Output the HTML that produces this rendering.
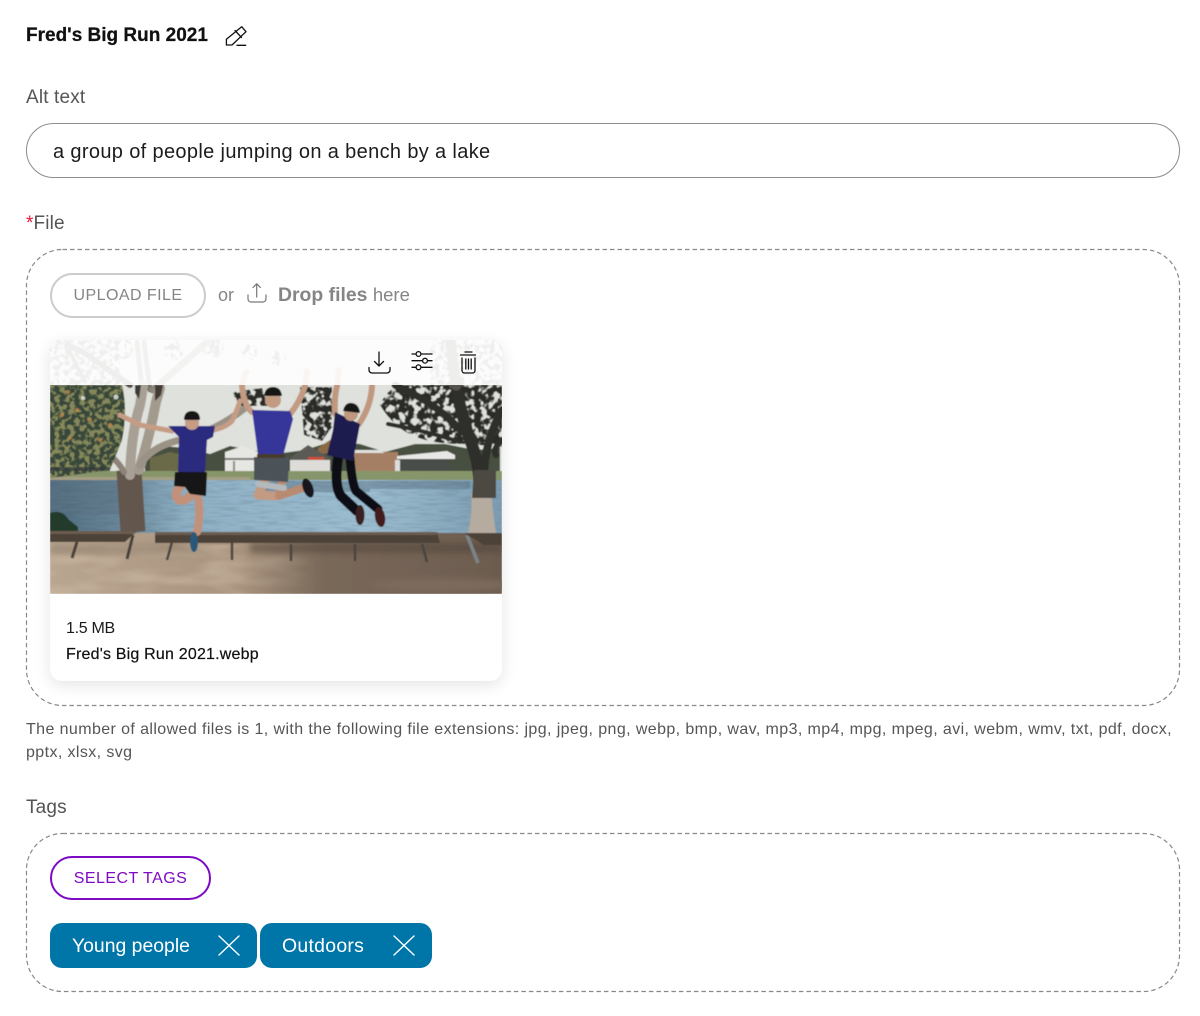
<!DOCTYPE html>
<html lang="en">
<head>
<meta charset="utf-8">
<title>Fred's Big Run 2021</title>
<style>
html,body{margin:0;padding:0;background:#fff}
body{position:relative;width:1200px;height:1016px;overflow:hidden;font-family:"Liberation Sans",sans-serif;color:#1a1a1a}
.a{position:absolute;white-space:nowrap}
h1{margin:0;font-size:19px;line-height:24px;font-weight:700;color:#111;-webkit-text-stroke:.25px #111}
.lbl{font-size:19px;line-height:24px;color:#555;letter-spacing:.15px}
.input{left:26px;top:123px;width:1152px;height:53px;border:1.5px solid #8c8c8c;border-radius:28px;box-sizing:content-box}
.inputtext{left:53px;top:139px;font-size:20px;line-height:26px;letter-spacing:.35px;color:#1c1c1c}
.btn{box-sizing:border-box;border:2px solid #ccc;border-radius:23px;font-size:16px;text-align:center;letter-spacing:.45px;color:#858585}
.card{left:50px;top:340px;width:452px;height:341px;background:#fff;border-radius:12px;box-shadow:0 4px 16px rgba(0,0,0,.11);overflow:hidden}
.tag{box-sizing:border-box;height:45px;background:#0076a8;border-radius:12px}
.tagt{font-size:19.400px;line-height:26px;color:#fff}
svg{display:block}
</style>
</head>
<body>
<h1 class="a" style="left:26px;top:24px">Fred's Big Run 2021</h1>
<svg class="a" style="left:220px;top:20px" width="32" height="32" viewBox="220 20 32 32" fill="none" stroke="#111" stroke-width="1.300" stroke-linejoin="round" stroke-linecap="round">
<path d="M241.700 26.700l4.300 5-14 13.300h-5.600v-5.700z"/><path d="M235 30.500l6.500 7"/><path d="M237 45.300h8.700"/>
</svg>

<div class="a lbl" style="left:26px;top:86px">Alt text</div>
<div class="a input"></div>
<div class="a inputtext">a group of people jumping on a bench by a lake</div>

<div class="a lbl" style="left:26px;top:212px"><span style="color:#f0143c">*</span>File</div>
<svg class="a" style="left:0;top:240px" width="1200" height="480" fill="none">
<rect x="26.500" y="9.500" width="1153" height="456" rx="36" stroke="#888" stroke-width="1.200" stroke-dasharray="4.500 3"/>
</svg>

<div class="a btn" style="left:50px;top:273px;width:156px;height:45px;line-height:41px">UPLOAD FILE</div>
<div class="a" style="left:218px;top:284px;font-size:18px;line-height:23px;color:#858585">or</div>
<svg class="a" style="left:244px;top:280px" width="26" height="26" viewBox="244 280 26 26" fill="none" stroke="#777" stroke-width="1.200" stroke-linecap="round" stroke-linejoin="round">
<path d="M256.700 297v-13M253 287.500l3.700-3.700 3.700 3.700"/><path d="M248 295v4a3 3 0 0 0 3 3h12a3 3 0 0 0 3-3v-4"/>
</svg>
<div class="a" style="left:278px;top:283px;font-size:19.400px;line-height:24px;color:#858585"><b>Drop files</b> <span style="font-size:18.500px">here</span></div>

<div class="a card">
<svg width="452" height="254" viewBox="50 340 452 254">
<defs>
<linearGradient id="wat" x1="0" x2="1" y1="0" y2="0">
<stop offset="0" stop-color="#4f6c7e"/><stop offset=".17" stop-color="#6d8a9c"/><stop offset=".3" stop-color="#8fb0c4"/><stop offset=".7" stop-color="#9dbdd1"/><stop offset="1" stop-color="#7d9db2"/>
</linearGradient>
<linearGradient id="gnd" x1="0" x2="1" y1="0" y2="0">
<stop offset="0" stop-color="#b9a690"/><stop offset=".42" stop-color="#a8937e"/><stop offset=".6" stop-color="#7a695a"/><stop offset="1" stop-color="#6c5c4f"/>
</linearGradient>
<linearGradient id="sandg" x1="0" x2="1" y1="0" y2="0">
<stop offset="0" stop-color="#d0bea8"/><stop offset=".6" stop-color="#cbb9a3"/><stop offset="1" stop-color="#cbb9a3" stop-opacity="0"/>
</linearGradient>
<clipPath id="cano"><path d="M50 385H122Q128 410 122 440L110 470 50 478z"/></clipPath>
<filter id="s" x="-5%" y="-5%" width="110%" height="110%"><feGaussianBlur stdDeviation=".5"/></filter>
<filter id="s2" x="-20%" y="-20%" width="140%" height="140%"><feGaussianBlur stdDeviation="3"/></filter>
<filter id="leaf" x="0" y="0" width="100%" height="100%" color-interpolation-filters="sRGB">
<feTurbulence type="fractalNoise" baseFrequency=".2" numOctaves="2" seed="4" result="n"/>
<feColorMatrix in="n" type="matrix" values="0 0 0 0 0 0 0 0 0 0 0 0 0 0 0 9 0 0 0 -4.200" result="m"/>
<feComposite in="SourceGraphic" in2="m" operator="in"/>
</filter>
<filter id="leaf2" x="0" y="0" width="100%" height="100%" color-interpolation-filters="sRGB">
<feTurbulence type="fractalNoise" baseFrequency=".16" numOctaves="2" seed="9" result="n"/>
<feColorMatrix in="n" type="matrix" values="0 0 0 0 0 0 0 0 0 0 0 0 0 0 0 8 0 0 0 -3.100" result="m"/>
<feComposite in="SourceGraphic" in2="m" operator="in"/>
</filter>
<filter id="rip" x="0" y="0" width="100%" height="100%" color-interpolation-filters="sRGB">
<feTurbulence type="fractalNoise" baseFrequency=".05 .55" numOctaves="2" seed="7" result="n"/>
<feColorMatrix in="n" type="matrix" values="0 0 0 0 0 0 0 0 0 0 0 0 0 0 0 5 0 0 0 -2.300" result="m"/>
<feComposite in="SourceGraphic" in2="m" operator="in"/>
</filter>
<filter id="sand" x="0" y="0" width="100%" height="100%" color-interpolation-filters="sRGB">
<feTurbulence type="fractalNoise" baseFrequency=".02 .07" numOctaves="2" seed="11" result="n"/>
<feColorMatrix in="n" type="matrix" values="0 0 0 0 0 0 0 0 0 0 0 0 0 0 0 3 0 0 0 -1.200" result="m"/>
<feComposite in="SourceGraphic" in2="m" operator="in"/>
</filter>
</defs>
<g filter="url(#s)">
<rect x="50" y="340" width="452" height="254" fill="#dfe1dc"/>

<!-- distant trees -->
<path d="M145 472v-18l18-8 22 2 25 6 20-8 20 4 25 4 30-4 25-8 30 2 25 8 30-8 30 0 30 6 25-2v24z" fill="#46503f"/>
<path d="M150 472v-14l20-6 20 4v16z" fill="#6b6a4a"/>
<path d="M318 448l12-8 18 2 8 10-38 2z" fill="#8a6b45"/>
<!-- buildings -->
<path d="M225 452l18-6 15 6v19h-33z" fill="#e6e6e3"/>
<rect x="225" y="458" width="33" height="2" fill="#777"/>
<rect x="233" y="461" width="2" height="10" fill="#888"/>
<path d="M290 458l18-13 22 13v3h-40z" fill="#5b5a55"/>
<rect x="290" y="460" width="40" height="11" fill="#dddcd8"/>
<rect x="308" y="457" width="16" height="3" fill="#c9503a"/>
<rect x="354" y="452" width="44" height="19" fill="#a57f63"/>
<path d="M354 450h28l2 3h-30z" fill="#e0e0dd"/>
<path d="M397 456l50-5 8 4v4h-58z" fill="#e7e8e6"/>
<rect x="400" y="459" width="50" height="12" fill="#4a4d4a"/>
<rect x="395" y="460" width="5" height="11" fill="#ddd"/>
<!-- grass and water -->
<rect x="50" y="471" width="452" height="10" fill="#87966a"/>
<rect x="50" y="477" width="200" height="3" fill="#a69e82"/>
<rect x="50" y="480" width="452" height="54" fill="url(#wat)"/>
<g fill="#5d7486" opacity=".5">
<rect x="260" y="481" width="110" height="11"/><rect x="370" y="481" width="100" height="8"/><rect x="50" y="481" width="75" height="34"/>
</g>
<rect x="50" y="480" width="452" height="54" fill="#34505f" opacity=".14" filter="url(#rip)"/>
<path d="M50 513q12-4 18 6l10 8v6H50z" fill="#243a2c"/>
<!-- ground -->
<rect x="50" y="533" width="452" height="61" fill="url(#gnd)"/>
<rect x="50" y="545" width="270" height="49" fill="url(#sandg)" opacity=".55" filter="url(#sand)"/>
<g filter="url(#s2)">
<path d="M50 544h130l40 10H50z" fill="#8f7e6c" opacity=".6"/>
<path d="M250 553h252v-10H250z" fill="#4f4338" opacity=".5"/>
<ellipse cx="440" cy="585" rx="70" ry="7" fill="#7c6b5c"/>
</g>

<!-- left tree (strokes) -->
<g fill="none" stroke-linecap="round">
<path d="M130 385L83 352 67 345" stroke="#55504a" stroke-width="6"/>
<path d="M85 382L70 352" stroke="#55504a" stroke-width="4"/>
<path d="M142 390L137 342" stroke="#7a746c" stroke-width="5"/>
<path d="M150 390L144 342" stroke="#7a746c" stroke-width="5"/>
<path d="M153 390L207 342" stroke="#8b847a" stroke-width="7"/>
<path d="M133 532Q131 500 129 470" stroke="#62574e" stroke-width="25" stroke-linecap="butt"/>
<path d="M130 475Q131 435 140 405 142 395 143 385" stroke="#a8a094" stroke-width="10"/>
<path d="M139 470Q150 435 156 402L160 388" stroke="#a39a8e" stroke-width="10"/>
<path d="M140 465Q150 448 176 441 215 432 245 408" stroke="#9b9286" stroke-width="7"/>
<path d="M124 472Q115 455 95 447" stroke="#8d8378" stroke-width="6"/>
</g>
<path d="M155 385l8 0-2 10-6 6z" fill="#3f3a36"/>
<path d="M135 385h6l-2 14-4-6z" fill="#3d3a37"/>
<!-- left canopy -->
<path d="M50 385H122Q128 410 122 440L110 470 50 478z" fill="#37463a"/>
<g clip-path="url(#cano)"><rect x="50" y="385" width="80" height="95" fill="#84885a" filter="url(#leaf)"/></g>
<g fill="#c68b48" opacity=".75"><circle cx="77" cy="410" r="2.200"/><circle cx="90" cy="420" r="2.200"/><circle cx="110" cy="425" r="2"/><circle cx="62" cy="415" r="2"/><circle cx="68" cy="392" r="2"/><circle cx="100" cy="440" r="2"/><circle cx="70" cy="438" r="1.800"/></g>
<g fill="#e0e3df" opacity=".85"><circle cx="83" cy="398" r="2"/><circle cx="116" cy="397" r="2.500"/><circle cx="127" cy="425" r="2"/></g>
<rect x="50" y="467" width="60" height="4" fill="#32383a" opacity=".7"/>
<!-- top foliage (under the overlay) -->
<g fill="#5a5f58" filter="url(#leaf)">
<rect x="50" y="340" width="70" height="45"/>
<circle cx="123" cy="349" r="10"/><circle cx="174" cy="350" r="10"/><circle cx="213" cy="347" r="11"/><circle cx="250" cy="352" r="8"/><circle cx="278" cy="358" r="8"/>
<rect x="430" y="340" width="72" height="45"/>
</g>

<!-- right tree -->
<g fill="#2b2c27" filter="url(#leaf2)">
<path d="M380 405q6-15 20-20h102v62q-20-2-40-3-30 0-48-8-20-8-34-31z"/>
<path d="M300 387h32v40l-10 14-18-6z"/><path d="M232 392l30-4 6 18h-30z"/>
</g>
<g fill="none" stroke="#2f2e29" stroke-linecap="round">
<path d="M478 505Q483 470 470 440 460 410 456 385" stroke-width="12"/>
<path d="M484 475Q485 440 502 410" stroke-width="8"/>
<path d="M496 455Q492 450 502 440" stroke-width="6"/>
<path d="M462 432Q440 405 395 385" stroke-width="7"/>
<path d="M460 442Q430 432 388 424" stroke-width="4"/>
<path d="M456 385L450 340" stroke="#55534c" stroke-width="11"/>
</g>
<path d="M468 533q5-22 3-38 3-8 20-6 2 25 5 44z" fill="#b5ab9e"/>
<path d="M474 470h22v28h-24z" fill="#4c4842"/>

<!-- benches -->
<g>
<path d="M77 542l-5 16M133 535l-6 24" stroke="#47403a" stroke-width="3" fill="none"/>
<path d="M50 531h87l-12 11H50z" fill="#4e4239"/>
<rect x="50" y="531" width="85" height="3" fill="#6c5c50"/>
<path d="M172 542l-5 18M232 543v17M291 544v17M355 544v17M422 544l5 18" stroke="#4a4540" stroke-width="2.500" fill="none"/>
<path d="M155 532h282l3 11H155z" fill="#4e4239"/>
<rect x="155" y="532" width="282" height="3" fill="#6c5c50"/>
<path d="M467 535l11 28" stroke="#7c8488" stroke-width="3.500" fill="none"/>
<path d="M464 533h38v12h-18z" fill="#4e4239"/>
</g>

<!-- person 1 -->
<g fill="none" stroke-linecap="round" stroke-linejoin="round">
<path d="M120 415l20 10 32 6" stroke="#c69c85" stroke-width="5"/>
<path d="M213 430q12-2 19-9 4-8 8-20" stroke="#c69c85" stroke-width="5"/>
<path d="M180 487q-7 8-1 13 6 2 13-6" stroke="#c29179" stroke-width="9"/>
<path d="M198 496q3 18-1 36" stroke="#c29179" stroke-width="8"/>
</g>
<path d="M168 426h47l-2 11-6 3-2 32h-27l1-35z" fill="#2a2a7e"/>
<path d="M175 472h32l-1 24-16-2-5-7-11-1z" fill="#141414"/>
<circle cx="192" cy="423" r="7" fill="#c69c85"/>
<path d="M184 420q0-9 8-9t8 9z" fill="#151515"/>
<ellipse cx="194" cy="542" rx="4" ry="10" fill="#2a5878"/>

<!-- person 2 -->
<g fill="none" stroke-linecap="round" stroke-linejoin="round">
<path d="M252 412q-8-6-10-26 1-8 5-14" stroke="#c39a82" stroke-width="6"/>
<path d="M290 414q10-12 15-28l2-15" stroke="#c39a82" stroke-width="6"/>
<path d="M265 480l-7 15 18 1" stroke="#c39a82" stroke-width="9"/>
<path d="M282 482l-3 14 24-8" stroke="#b98a72" stroke-width="8"/>
<path d="M258 484l26 4" stroke="#b4b9bd" stroke-width="6"/>
</g>
<path d="M252 410l38 1 3 8-10 37-25-1z" fill="#36349a"/>
<path d="M254 457h35l-1 25-34-2z" fill="#4b5358"/>
<rect x="257" y="454" width="28" height="4" fill="#4a3a2a"/>
<ellipse cx="308" cy="488" rx="5" ry="10" transform="rotate(-20 308 488)" fill="#17171b"/>
<circle cx="273" cy="400" r="8" fill="#c39a82"/>
<path d="M264 396q1-9 9-9t9 9z" fill="#181818"/>

<!-- person 3 -->
<g fill="none" stroke-linecap="round" stroke-linejoin="round">
<path d="M337 386q-3 12-2 28M337 386l2-16" stroke="#c0987f" stroke-width="6"/>
<path d="M372 386q-1 20-13 38" stroke="#c0987f" stroke-width="6"/>
<path d="M338 458q-4 28 3 38l16 15" stroke="#0e0e12" stroke-width="10"/>
<path d="M350 458q2 26 6 33l22 18" stroke="#0e0e12" stroke-width="9"/>
</g>
<path d="M335 412l25 12-7 37-26-6 6-25z" fill="#1e1e50"/>
<circle cx="351" cy="414" r="7" fill="#c0987f"/>
<path d="M343 411q2-9 9-8t8 10z" fill="#151515"/>
<ellipse cx="360" cy="515" rx="4.500" ry="10" fill="#3a2020"/>
<ellipse cx="380" cy="517" rx="5" ry="10" transform="rotate(-10 380 517)" fill="#421c1c"/>
</g>
<!-- white translucent header -->
<rect x="50" y="340" width="452" height="45" fill="#fff" opacity=".9"/>
<!-- header icons -->
<g fill="none" stroke="#111" stroke-width="1.300" stroke-linecap="round" stroke-linejoin="round">
<path d="M379 352v14M374.500 361.500l4.500 4.500 4.500-4.500"/>
<path d="M369 367.500v2.500a3 3 0 0 0 3 3h15a3 3 0 0 0 3-3v-2.500"/>
<path d="M412 354h4M421 354h11M412 360.700h10M428 360.700h4M412 367.300h4M421 367.300h11"/>
<circle cx="418.500" cy="354" r="2.400"/><circle cx="425" cy="360.700" r="2.400"/><circle cx="418.500" cy="367.300" r="2.400"/>
<path d="M465 352h7M460.500 355h15"/>
<path d="M462 358v12.500a2.500 2.500 0 0 0 2.500 2.500h8a2.500 2.500 0 0 0 2.500-2.500V358"/>
<path d="M465.800 359v10M468.500 359v10M471.200 359v10"/>
</g>
</svg>
<div class="a" style="left:16px;top:278px;font-size:16px;line-height:21px;letter-spacing:-.3px;color:#1a1a1a">1.5 MB</div>
<div class="a" style="left:16px;top:304px;font-size:16px;line-height:21px;letter-spacing:.2px;color:#111;-webkit-text-stroke:.2px #111">Fred's Big Run 2021.webp</div>
</div>

<div class="a" style="left:26px;top:718px;font-size:16px;line-height:23px;color:#555;letter-spacing:.4px">The number of allowed files is 1, with the following file extensions: jpg, jpeg, png, webp, bmp, wav, mp3, mp4, mpg, mpeg, avi, webm, wmv, txt, pdf, docx,<br>pptx, xlsx, svg</div>

<div class="a lbl" style="left:26px;top:796px">Tags</div>
<svg class="a" style="left:0;top:825px" width="1200" height="175" fill="none">
<rect x="26.500" y="8.500" width="1153" height="158" rx="36" stroke="#888" stroke-width="1.200" stroke-dasharray="4.500 3"/>
</svg>

<div class="a btn" style="left:50px;top:856px;width:161px;height:44px;line-height:41px;border-color:#7d0bc4;color:#7d0bc4">SELECT TAGS</div>

<div class="a tag" style="left:50px;top:923px;width:207px"></div>
<div class="a tagt" style="left:72px;top:933px">Young people</div>
<div class="a tag" style="left:260px;top:923px;width:172px"></div>
<div class="a tagt" style="left:282px;top:933px;letter-spacing:.3px">Outdoors</div>
<svg class="a" style="left:210px;top:930px" width="215" height="32" viewBox="210 930 215 32" fill="none" stroke="#fff" stroke-width="1.400" stroke-linecap="round">
<path d="M219 936l20 19M239 936l-20 19M394 936l20 19M414 936l-20 19"/>
</svg>
</body>
</html>
